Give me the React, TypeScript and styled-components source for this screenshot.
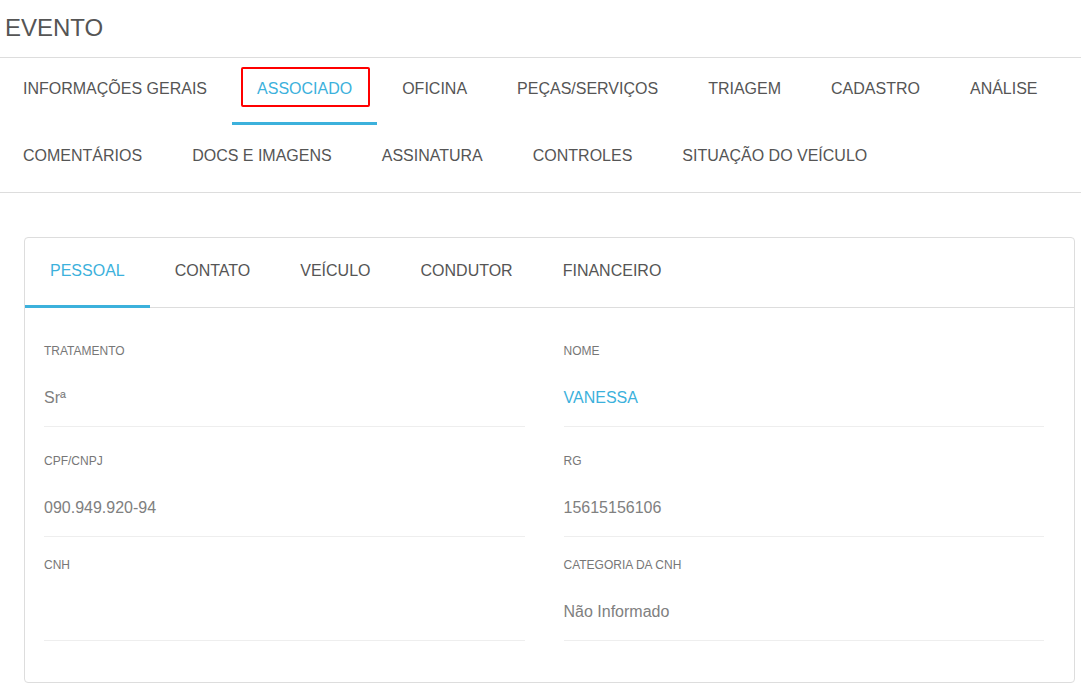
import React from "react";
import styled, { createGlobalStyle } from "styled-components";

const GlobalStyle = createGlobalStyle`
  * {
    box-sizing: border-box;
  }
  body {
    margin: 0;
    background: #ffffff;
    font-family: "Liberation Sans", Arial, sans-serif;
    color: #555555;
  }
`;

const BLUE = "#3cb1dc";

const Page = styled.div`
  width: 100%;
  min-height: 684px;
  overflow: hidden;
`;

const Header = styled.h1`
  margin: 0;
  padding: 14px 0 15px 5px;
  font-size: 24px;
  line-height: 28px;
  font-weight: normal;
  color: #555555;
  border-bottom: 1px solid #dddddd;
`;

const MainTabs = styled.nav`
  display: flex;
  flex-wrap: wrap;
  margin-left: -2px;
  border-bottom: 1px solid #dddddd;
`;

const MainTab = styled.div<{ $active?: boolean }>`
  position: relative;
  height: 67px;
  padding: 22px 25px 0;
  font-size: 16px;
  line-height: 18px;
  white-space: nowrap;
  color: ${(p) => (p.$active ? BLUE : "#555555")};
  border-bottom: 3px solid ${(p) => (p.$active ? BLUE : "transparent")};
  cursor: pointer;
`;

// red outline drawn over the current tab
const Marker = styled.span`
  position: absolute;
  left: 9px;
  right: 7px;
  top: 9px;
  height: 40px;
  border: 2px solid #ff0000;
  border-radius: 2px;
  pointer-events: none;
`;

const Card = styled.section`
  margin: 44px 6px 0 24px;
  border: 1px solid #dddddd;
  border-radius: 4px;
  padding-bottom: 41px;
`;

const SubTabs = styled.div`
  display: flex;
  border-bottom: 1px solid #dddddd;
`;

const SubTab = styled.div<{ $active?: boolean }>`
  height: 70px;
  margin-bottom: -1px;
  padding: 24px 25px 0;
  font-size: 16px;
  line-height: 18px;
  color: ${(p) => (p.$active ? BLUE : "#555555")};
  border-bottom: 3px solid ${(p) => (p.$active ? BLUE : "transparent")};
  cursor: pointer;
`;

const Fields = styled.div`
  display: grid;
  grid-template-columns: 1fr 1fr;
  column-gap: 39px;
  padding: 36px 30px 0 19px;
`;

const Field = styled.div<{ $top: number }>`
  margin-top: ${(p) => p.$top}px;
  padding-bottom: 19px;
  border-bottom: 1px solid #eeeeee;
`;

const Label = styled.div`
  font-size: 12px;
  line-height: 14px;
  color: #777777;
  margin-bottom: 31px;
`;

const Value = styled.div<{ $link?: boolean }>`
  min-height: 18px;
  font-size: 16px;
  line-height: 18px;
  color: ${(p) => (p.$link ? BLUE : "#808080")};
`;

const mainTabs = [
  "INFORMAÇÕES GERAIS",
  "ASSOCIADO",
  "OFICINA",
  "PEÇAS/SERVIÇOS",
  "TRIAGEM",
  "CADASTRO",
  "ANÁLISE",
  "COMENTÁRIOS",
  "DOCS E IMAGENS",
  "ASSINATURA",
  "CONTROLES",
  "SITUAÇÃO DO VEÍCULO",
];

const subTabs = ["PESSOAL", "CONTATO", "VEÍCULO", "CONDUTOR", "FINANCEIRO"];

type Info = { label: string; value: string; link?: boolean };

const rows: { top: number; cells: Info[] }[] = [
  {
    top: 0,
    cells: [
      { label: "TRATAMENTO", value: "Srª" },
      { label: "NOME", value: "VANESSA", link: true },
    ],
  },
  {
    top: 27,
    cells: [
      { label: "CPF/CNPJ", value: "090.949.920-94" },
      { label: "RG", value: "15615156106" },
    ],
  },
  {
    top: 21,
    cells: [
      { label: "CNH", value: "" },
      { label: "CATEGORIA DA CNH", value: "Não Informado" },
    ],
  },
];

const App: React.FC = () => {
  return (
    <Page>
      <GlobalStyle />
      <Header>EVENTO</Header>
      <MainTabs>
        {mainTabs.map((t) => (
          <MainTab key={t} $active={t === "ASSOCIADO"}>
            {t}
            {t === "ASSOCIADO" && <Marker />}
          </MainTab>
        ))}
      </MainTabs>
      <Card>
        <SubTabs>
          {subTabs.map((t, i) => (
            <SubTab key={t} $active={i === 0}>
              {t}
            </SubTab>
          ))}
        </SubTabs>
        <Fields>
          {rows.map((row) =>
            row.cells.map((c) => (
              <Field key={c.label} $top={row.top}>
                <Label>{c.label}</Label>
                <Value $link={c.link}>{c.value}</Value>
              </Field>
            ))
          )}
        </Fields>
      </Card>
    </Page>
  );
};

export default App;
